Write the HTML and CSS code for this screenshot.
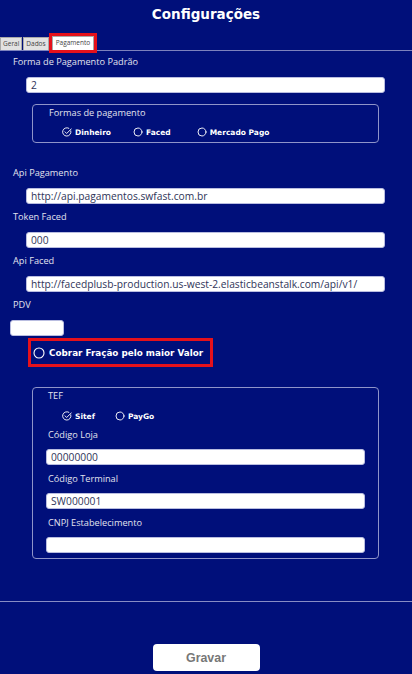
FILE: index.html
```html
<!DOCTYPE html>
<html lang="pt-BR">
<head>
  <meta charset="UTF-8" />
  <meta name="viewport" content="width=device-width, initial-scale=1.0"/>
  <title>Configurações</title>
  <link rel="stylesheet" href="styles.css">
</head>
<body>
  <h1 class="title">Configurações</h1>

  <div class="tabs">
    <div class="tab">Geral</div>
    <div class="tab">Dados</div>
    <div class="tab active">Pagamento</div>
  </div>

  <div class="form">
    <div class="field first">
      <div class="label">Forma de Pagamento Padrão</div>
      <div class="input">2</div>
    </div>

    <div class="group">
      <div class="group-title">Formas de pagamento</div>
      <div class="options">
        <span class="opt">
          <svg class="ico" viewBox="0 0 12 12"><path d="M10.6 4.6A5 5 0 1 1 8.2 1.5" /><path d="M3.6 5.8L5.6 7.8L11.2 2.2" /></svg>
          Dinheiro
        </span>
        <span class="opt">
          <svg class="ico" viewBox="0 0 12 12"><circle cx="6" cy="6" r="4.8" /></svg>
          Faced
        </span>
        <span class="opt wide">
          <svg class="ico" viewBox="0 0 12 12"><circle cx="6" cy="6" r="4.8" /></svg>
          Mercado Pago
        </span>
      </div>
    </div>

    <div class="field spaced">
      <div class="label">Api Pagamento</div>
      <div class="input">http://api.pagamentos.swfast.com.br</div>
    </div>
    <div class="field">
      <div class="label">Token Faced</div>
      <div class="input">000</div>
    </div>
    <div class="field">
      <div class="label">Api Faced</div>
      <div class="input">http://facedplusb-production.us-west-2.elasticbeanstalk.com/api/v1/</div>
    </div>
    <div class="field">
      <div class="label">PDV</div>
      <div class="input pdv"></div>
    </div>

    <div class="highlight">
      <svg class="ico big" viewBox="0 0 12 12"><circle cx="6" cy="6" r="5" /></svg>
      <span>Cobrar Fração pelo maior Valor</span>
    </div>

    <div class="group tef">
      <div class="group-title">TEF</div>
      <div class="options">
        <span class="opt">
          <svg class="ico" viewBox="0 0 12 12"><path d="M10.6 4.6A5 5 0 1 1 8.2 1.5" /><path d="M3.6 5.8L5.6 7.8L11.2 2.2" /></svg>
          Sitef
        </span>
        <span class="opt">
          <svg class="ico" viewBox="0 0 12 12"><circle cx="6" cy="6" r="4.8" /></svg>
          PayGo
        </span>
      </div>
      <div class="field">
        <div class="label">Código Loja</div>
        <div class="input">00000000</div>
      </div>
      <div class="field">
        <div class="label">Código Terminal</div>
        <div class="input">SW000001</div>
      </div>
      <div class="field">
        <div class="label">CNPJ Estabelecimento</div>
        <div class="input"></div>
      </div>
    </div>
  </div>

  <hr class="divider">
  <button class="save">Gravar</button>
</body>
</html>
```

FILE: styles.css
```css
body {
  margin: 0;
  background-color: #000f7a;
  color: #e2e3ee;
  font-family: "Open Sans", sans-serif;
}

.title {
  margin: 0;
  height: 30px;
  line-height: 28px;
  text-align: center;
  font-family: "DejaVu Sans", sans-serif;
  font-size: 13.5px;
  font-weight: bold;
  color: #fff;
}

/* tab strip */
.tabs {
  display: flex;
  align-items: flex-end;
  height: 16px;
  margin-top: 4px;
  border-bottom: 1px solid #7d82bd;
}

.tab {
  box-sizing: border-box;
  height: 13px;
  padding: 0 2px;
  margin-right: 1px;
  background: #e2e2e2;
  border: 1px solid #a9a9a9;
  border-bottom: none;
  color: #444;
  font-size: 6.5px;
  line-height: 12px;
}

.tab.active {
  height: 14px;
  margin-left: 2px;
  padding: 0 3px;
  background: #fff;
  outline: 3px solid #e5111b;
}

.form {
  padding-left: 13px;
}

.field {
  margin-top: 6px;
}

.field.first {
  margin-top: 4px;
}

.field.spaced {
  margin-top: 23px;
}

.label {
  height: 14px;
  line-height: 14px;
  font-size: 9.2px;
}

.input {
  box-sizing: border-box;
  height: 16px;
  width: 359px;
  margin: 8px 0 0 13px;
  padding: 0 4px;
  background: #fff;
  border: 1px solid #b9bde0;
  border-radius: 3px;
  color: #2f3559;
  font-size: 10.25px;
  line-height: 14px;
  white-space: nowrap;
  overflow: hidden;
}

.input.pdv {
  width: 54px;
  margin-left: -3px;
}

.group {
  box-sizing: border-box;
  width: 347px;
  margin: 11px 0 0 19px;
  padding: 2px 0 4px 16px;
  border: 1px solid #8f94c9;
  border-radius: 4px;
}

.group-title {
  height: 12px;
  line-height: 12px;
  font-size: 9.2px;
}

.options {
  display: flex;
  align-items: center;
  gap: 22px;
  height: 12px;
  margin: 7px 0 0 13px;
}

.opt {
  display: flex;
  align-items: center;
  gap: 3px;
  color: #fff;
  font-family: "DejaVu Sans", sans-serif;
  font-size: 7.5px;
  font-weight: bold;
}

.opt.wide {
  margin-left: 4px;
}

.ico {
  width: 10px;
  height: 10px;
  fill: none;
  stroke: #fff;
  stroke-width: 1.1;
  stroke-linecap: round;
  stroke-linejoin: round;
}

.ico.big {
  width: 12px;
  height: 12px;
}

.highlight {
  box-sizing: border-box;
  display: flex;
  align-items: center;
  gap: 4px;
  width: 185px;
  height: 29px;
  margin: 2px 0 0 15px;
  padding-left: 2px;
  border: 3px solid #e5111b;
  color: #fff;
  font-family: "DejaVu Sans", sans-serif;
  font-size: 8.8px;
  font-weight: bold;
}

.group.tef {
  height: 172px;
  margin-top: 20px;
  padding: 2px 0 5px 15px;
}

.tef .options {
  margin-top: 8px;
  margin-left: 14px;
  gap: 20px;
}

.tef .field .input {
  width: 319px;
  margin: 7px 0 0 -2px;
}

.tef .field + .field {
  margin-top: 7px;
}

.divider {
  margin: 42px 0 0;
  border: none;
  border-top: 1px solid #878cc4;
}

.save {
  display: block;
  width: 107px;
  height: 27px;
  margin: 42px auto 0;
  background: #fff;
  border: none;
  border-radius: 4px;
  color: #777;
  font-family: "Liberation Sans", sans-serif;
  font-size: 12.4px;
  font-weight: bold;
}
```
